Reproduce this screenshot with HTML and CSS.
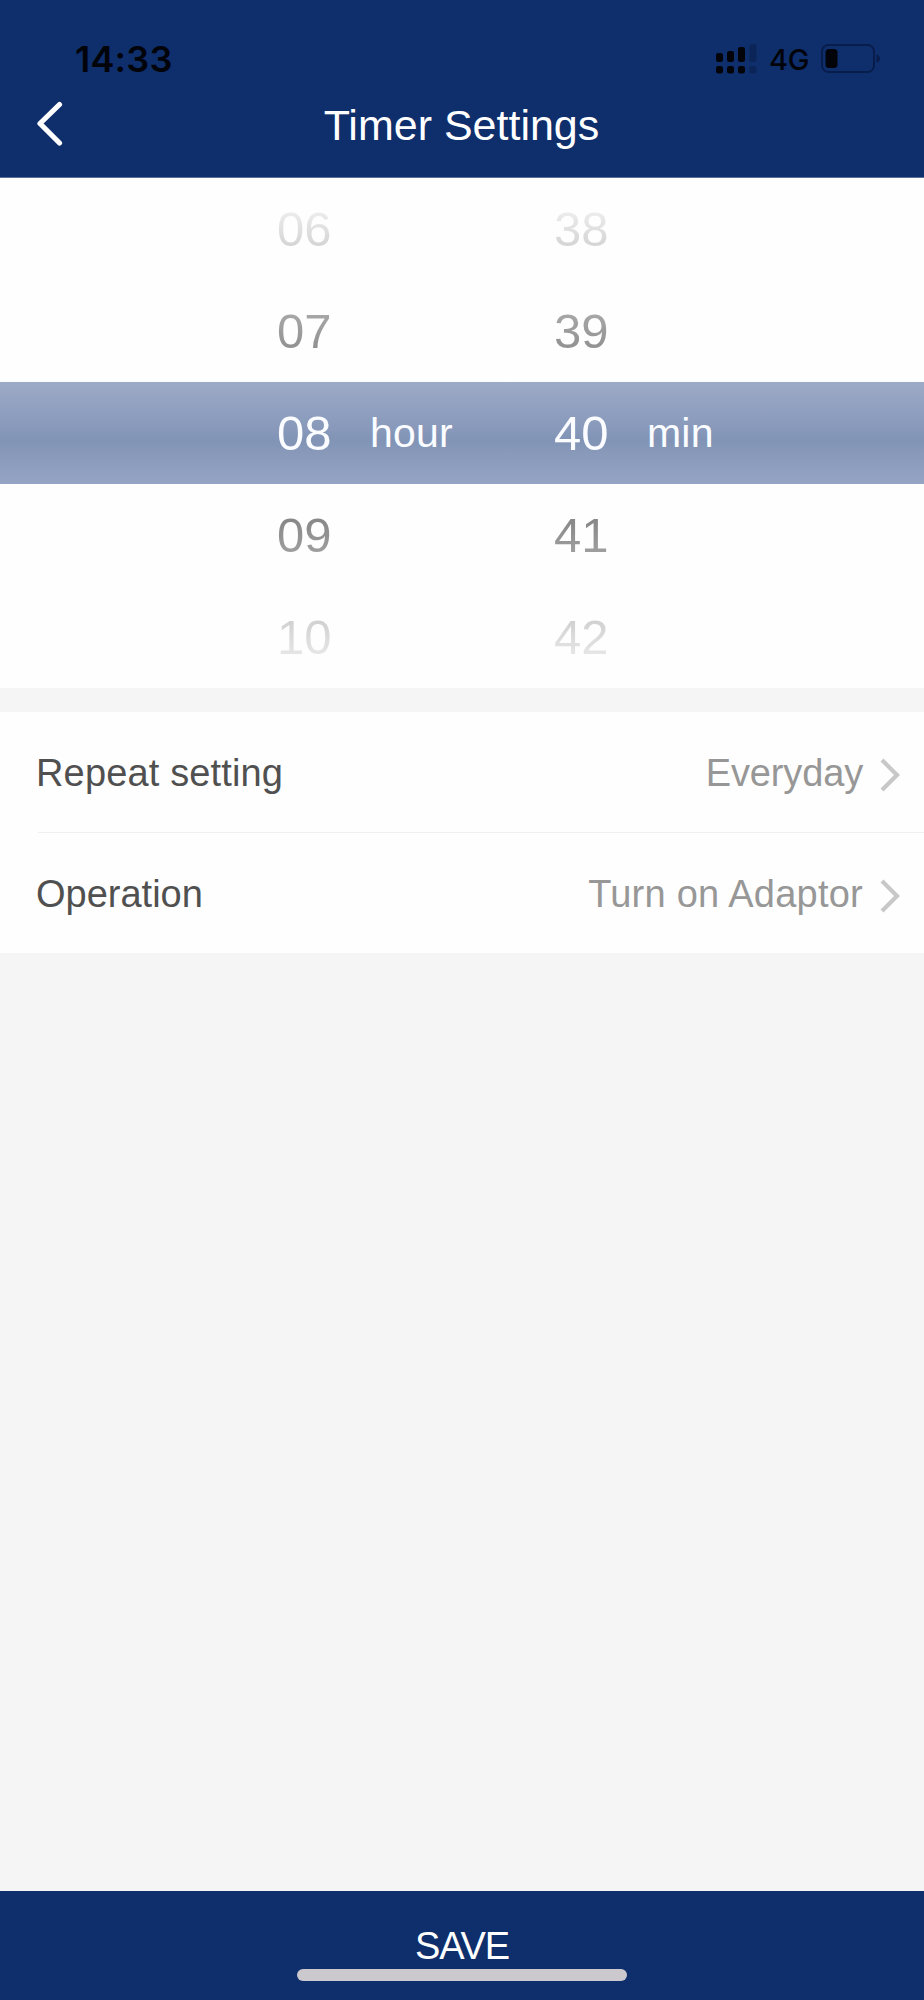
FILE: index.html
```html
<!DOCTYPE html>
<html lang="en">
<head>
<meta charset="utf-8">
<title>Timer Settings</title>
<link rel="stylesheet" href="styles.css">
</head>
<body>
<div class="screen">
  <header class="header">
    <div class="status">
      <span class="time">14:33</span>
      <div class="status-right">
        <svg class="signal" width="41" height="30" viewBox="0 0 41 30">
          <rect x="0" y="9" width="7" height="9" rx="2.3"/><rect x="11" y="7" width="7" height="11" rx="2.3"/><rect x="22" y="3" width="7" height="15" rx="2.3"/>
          <rect x="0" y="22" width="7" height="7.5" rx="2.3"/><rect x="11" y="22" width="7" height="7.5" rx="2.3"/><rect x="22" y="22" width="7" height="7.5" rx="2.3"/>
          <g opacity=".2"><rect x="33.500" y="0" width="7" height="18" rx="2.3"/><rect x="33.500" y="22" width="7" height="7.500" rx="2.3"/></g>
        </svg>
        <span class="network">4G</span>
        <svg class="battery" width="60" height="30" viewBox="0 0 60 30">
          <rect x="1" y="1" width="52" height="27" rx="6.500" fill="none" stroke="#091d4c" stroke-width="2"/>
          <rect x="4.500" y="5" width="12" height="19" rx="3.500"/>
          <path d="M55.500 10.500Q59 11.500 59 14.500T55.500 18.500Z" fill="#091d4c"/>
        </svg>
      </div>
    </div>
    <div class="titlebar">
      <svg class="back" width="28" height="46" viewBox="0 0 28 46"><path d="M23.500 3.500L4 22.500L23.500 42" fill="none" stroke="#fff" stroke-width="5.200" stroke-linecap="round" stroke-linejoin="round"/></svg>
      <h1 class="title">Timer Settings</h1>
    </div>
  </header>
  <section class="picker">
    <div class="row outer top"><span class="num">06</span><span class="unit"></span><span class="num">38</span></div>
    <div class="row inner top"><span class="num">07</span><span class="unit"></span><span class="num">39</span></div>
    <div class="row selected"><span class="num">08</span><span class="unit">hour</span><span class="num">40</span><span class="unit">min</span></div>
    <div class="row inner bottom"><span class="num">09</span><span class="unit"></span><span class="num">41</span></div>
    <div class="row outer bottom"><span class="num">10</span><span class="unit"></span><span class="num">42</span></div>
  </section>
  <section class="list">
    <div class="item"><span class="label repeat">Repeat setting</span><span class="value everyday">Everyday</span>
      <svg class="chevron" width="21" height="34" viewBox="0 0 21 34"><path d="M2 2L17 17L2 32" fill="none" stroke="#c8c8c8" stroke-width="4.200"/></svg></div>
    <div class="item"><span class="label operation">Operation</span><span class="value turn-on">Turn on Adaptor</span>
      <svg class="chevron" width="21" height="34" viewBox="0 0 21 34"><path d="M2 2L17 17L2 32" fill="none" stroke="#c8c8c8" stroke-width="4.200"/></svg></div>
  </section>
  <footer class="footer"><span class="save">SAVE</span><div class="home-bar"></div></footer>
</div>
</body>
</html>
```
FILE: styles.css
```css
* { box-sizing: border-box; }
body { margin: 0; font-family: "Liberation Sans", Arial, sans-serif; }
.screen { width: 924px; height: 2000px; display: flex; flex-direction: column; background: #f5f5f5; overflow: hidden; }
.header { height: 178px; flex: none; background: #0e2e6c; border-bottom: 1px solid #5c6e98; }
.status { height: 88px; padding: 44px 43px 0 75px; display: flex; justify-content: space-between; color: #02040a; font-family: Inter, sans-serif; }
.time { font-size: 36px; line-height: 30px; font-weight: 600; letter-spacing: 0.2px; }
.status-right { display: flex; }
.signal { margin-right: 12px; fill: #02040a; }
.battery { fill: #02040a; margin-left: 12px; }
.network { width: 40px; font-size: 29px; line-height: 32px; font-weight: 500; letter-spacing: -0.4px; white-space: nowrap; }
.titlebar { height: 72px; display: flex; align-items: center; padding-left: 36px; padding-right: 65px; }
.back { flex: none; }
.title { flex: 1; margin: 0; text-align: center; color: #fff; font-weight: 400; font-size: 43px; line-height: 72px; padding-top: 1px; }
.picker { height: 510px; flex: none; background: #fefefe; }
.row { height: 102px; display: grid; grid-template-columns: 92px 185px 92px 185px; padding-left: 277px; align-items: center; }
.num { font-size: 49px; line-height: 102px; color: transparent; background-clip: text; -webkit-background-clip: text; }
.outer.top .num { background-image: linear-gradient(#f2f2f2 25%, #cbcbcb 80%); }
.inner.top .num { background-image: linear-gradient(#b0b0b0 20%, #858585 85%); }
.inner.bottom .num { background-image: linear-gradient(#7d7d7d 20%, #ababab 85%); }
.outer.bottom .num { background-image: linear-gradient(#c8c8c8 20%, #eeeeee 80%); }
.selected { background: linear-gradient(#9daac7, #8798ba 48%, #8194b5 57%, #8999ba 70%, #95a4c3); }
.selected .num { color: #fafcff; }
.unit { font-size: 41px; line-height: 102px; color: #fafcff; padding-left: 1px; letter-spacing: 0.2px; }
.list { height: 241px; flex: none; margin-top: 24px; background: #fefefe; }
.item { height: 121px; margin-left: 38px; padding: 3px 23px 0 0; display: flex; align-items: center; font-size: 38px; border-bottom: 1px solid #f0f0f0; }
.item:last-child { height: 120px; border-bottom: 0; }
.label { color: #505050; margin-left: -2px; }
.repeat { letter-spacing: 0.15px; }
.value { margin-left: auto; color: #979797; }
.everyday { letter-spacing: -0.15px; }
.turn-on { letter-spacing: 0.25px; }
.chevron { margin: 3px 0 0 17px; }
.footer { margin-top: auto; height: 109px; background: #0e2e6c; display: flex; flex-direction: column; align-items: center; padding-top: 33px; }
.save { color: #fff; font-size: 38px; line-height: 44px; letter-spacing: -1.2px; }
.home-bar { width: 330px; height: 12px; margin-top: 1px; border-radius: 6px; background: #cbc9ce; }
```
